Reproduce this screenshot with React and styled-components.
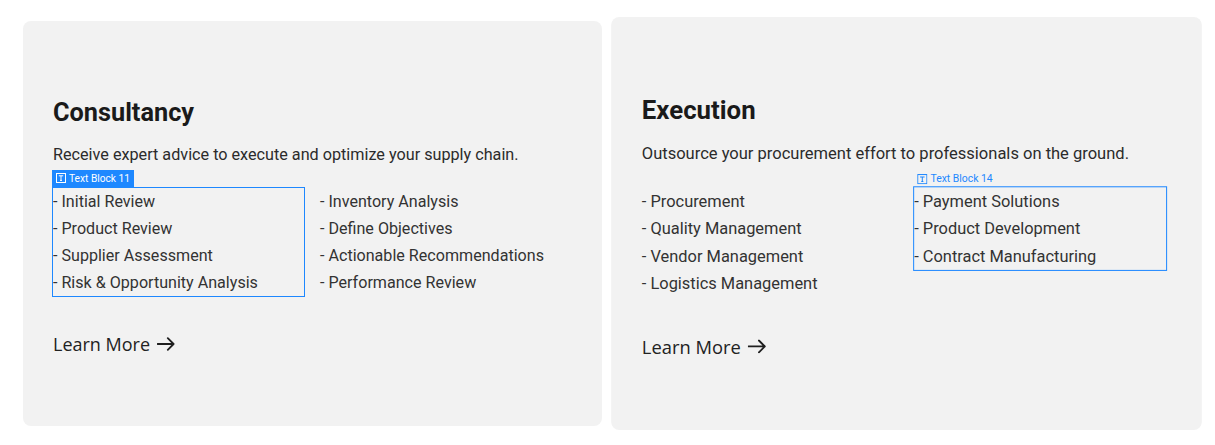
import React from "react";
import styled, { createGlobalStyle } from "styled-components";

const Global = createGlobalStyle`
  html, body { margin: 0; padding: 0; background: #ffffff; }
  body { font-family: Roboto, "Noto Sans", sans-serif; }
  * { box-sizing: border-box; }
`;

const Page = styled.div`
  display: flex;
  gap: 15px;
  padding: 21px 0 0 23px;
  width: 1215px;
  height: 445px;
`;

const Card = styled.div`
  width: 579px;
  height: 405px;
  background: #f2f2f2;
  border-radius: 8px;
  padding: 78px 30px 0 30px;
  display: flex;
  flex-direction: column;
  transform: ${(p) => (p.$hover ? "scale(1.02)" : "none")};
`;

const Title = styled.h2`
  margin: 0;
  font-family: Roboto, sans-serif;
  font-weight: 700;
  font-size: 25.3px;
  line-height: 28.8px;
  color: #1a1a1a;
`;

const Desc = styled.p`
  margin: 15px 0 0 0;
  font-family: Roboto, sans-serif;
  font-size: 16.2px;
  line-height: 24px;
  color: #2b2b2b;
`;

const Columns = styled.div`
  margin-top: 21px;
  display: grid;
  grid-template-columns: 251px 247px;
  column-gap: 16px;
`;

const Col = styled.div`
  position: relative;
  display: flex;
  flex-direction: column;
  outline: ${(p) => (p.$selected ? "1px solid #1e88ff" : "none")};
  outline-offset: 0;
  align-self: start;
`;

const Item = styled.div`
  font-family: Roboto, sans-serif;
  font-size: 16.1px;
  line-height: 27px;
  color: #333333;
  white-space: nowrap;
`;

const Label = styled.div`
  position: absolute;
  bottom: 100%;
  left: ${(p) => (p.$filled ? "-1px" : "3px")};
  height: ${(p) => (p.$filled ? "17px" : "14px")};
  margin-bottom: 1px;
  padding: 0 4px;
  display: flex;
  align-items: center;
  gap: 3px;
  background: ${(p) => (p.$filled ? "#1e88ff" : "transparent")};
  color: ${(p) => (p.$filled ? "#ffffff" : "#1e88ff")};
  font-family: Roboto, sans-serif;
  font-size: 10.2px;
  white-space: nowrap;
  padding-left: ${(p) => (p.$filled ? "4px" : "0")};
`;

const LearnMore = styled.a`
  margin-top: 36px;
  display: flex;
  align-items: center;
  gap: 7px;
  font-family: "Open Sans", sans-serif;
  font-size: 18px;
  line-height: 24px;
  color: #222222;
  text-decoration: none;
  cursor: pointer;
`;

const TIcon = () => (
  <svg width="10" height="10" viewBox="0 0 10 10" fill="none">
    <rect x="0.5" y="0.5" width="9" height="9" stroke="currentColor" strokeWidth="1" />
    <path d="M2.8 2.8 H7.2 M5 2.8 V7.4 M4 7.4 H6" stroke="currentColor" strokeWidth="1" />
  </svg>
);

const Arrow = () => (
  <svg width="18" height="14" viewBox="0 0 18 14" fill="none">
    <path d="M0.5 7 H16.5 M10.8 1.2 L16.6 7 L10.8 12.8" stroke="#1f1f1f" strokeWidth="1.8" strokeLinecap="round" strokeLinejoin="round" />
  </svg>
);

const cards = [
  {
    title: "Consultancy",
    desc: "Receive expert advice to execute and optimize your supply chain.",
    cols: [
      ["Initial Review", "Product Review", "Supplier Assessment", "Risk & Opportunity Analysis"],
      ["Inventory Analysis", "Define Objectives", "Actionable Recommendations", "Performance Review"],
    ],
    selected: 0,
    label: "Text Block 11",
    filled: true,
    hover: false,
  },
  {
    title: "Execution",
    desc: "Outsource your procurement effort to professionals on the ground.",
    cols: [
      ["Procurement", "Quality Management", "Vendor Management", "Logistics Management"],
      ["Payment Solutions", "Product Development", "Contract Manufacturing"],
    ],
    selected: 1,
    label: "Text Block 14",
    filled: false,
    hover: true,
  },
];

export default function App() {
  return (
    <>
      <Global />
      <Page>
        {cards.map((c) => (
          <Card key={c.title} $hover={c.hover}>
            <Title>{c.title}</Title>
            <Desc>{c.desc}</Desc>
            <Columns>
              {c.cols.map((col, i) => (
                <Col key={i} $selected={c.selected === i}>
                  {c.selected === i && (
                    <Label $filled={c.filled}>
                      <TIcon />
                      {c.label}
                    </Label>
                  )}
                  {col.map((it) => (
                    <Item key={it}>- {it}</Item>
                  ))}
                </Col>
              ))}
            </Columns>
            <LearnMore>
              Learn More <Arrow />
            </LearnMore>
          </Card>
        ))}
      </Page>
    </>
  );
}
